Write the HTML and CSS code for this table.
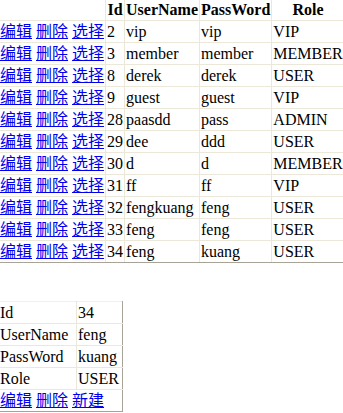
FILE: index.html
```html
<!DOCTYPE html>
<html>
<head>
<meta charset="utf-8">
<link rel="stylesheet" href="styles.css">
</head>
<body>
<div class="page">
<table class="grid list">
  <colgroup><col class="c-act"><col class="c-id"><col class="c-name"><col class="c-pass"><col class="c-role"></colgroup>
  <tr><th></th><th>Id</th><th>UserName</th><th>PassWord</th><th>Role</th></tr>
  <tr><td class="act"><a href="#">编辑</a> <a href="#">删除</a> <a href="#">选择</a></td><td>2</td><td>vip</td><td>vip</td><td>VIP</td></tr>
  <tr><td class="act"><a href="#">编辑</a> <a href="#">删除</a> <a href="#">选择</a></td><td>3</td><td>member</td><td>member</td><td>MEMBER</td></tr>
  <tr><td class="act"><a href="#">编辑</a> <a href="#">删除</a> <a href="#">选择</a></td><td>8</td><td>derek</td><td>derek</td><td>USER</td></tr>
  <tr><td class="act"><a href="#">编辑</a> <a href="#">删除</a> <a href="#">选择</a></td><td>9</td><td>guest</td><td>guest</td><td>VIP</td></tr>
  <tr><td class="act"><a href="#">编辑</a> <a href="#">删除</a> <a href="#">选择</a></td><td>28</td><td>paasdd</td><td>pass</td><td>ADMIN</td></tr>
  <tr><td class="act"><a href="#">编辑</a> <a href="#">删除</a> <a href="#">选择</a></td><td>29</td><td>dee</td><td>ddd</td><td>USER</td></tr>
  <tr><td class="act"><a href="#">编辑</a> <a href="#">删除</a> <a href="#">选择</a></td><td>30</td><td>d</td><td>d</td><td>MEMBER</td></tr>
  <tr><td class="act"><a href="#">编辑</a> <a href="#">删除</a> <a href="#">选择</a></td><td>31</td><td>ff</td><td>ff</td><td>VIP</td></tr>
  <tr><td class="act"><a href="#">编辑</a> <a href="#">删除</a> <a href="#">选择</a></td><td>32</td><td>fengkuang</td><td>feng</td><td>USER</td></tr>
  <tr><td class="act"><a href="#">编辑</a> <a href="#">删除</a> <a href="#">选择</a></td><td>33</td><td>feng</td><td>feng</td><td>USER</td></tr>
  <tr><td class="act"><a href="#">编辑</a> <a href="#">删除</a> <a href="#">选择</a></td><td>34</td><td>feng</td><td>kuang</td><td>USER</td></tr>
</table>

<table class="grid detail">
  <colgroup><col class="c-label"><col class="c-value"></colgroup>
  <tr><td>Id</td><td>34</td></tr>
  <tr><td>UserName</td><td>feng</td></tr>
  <tr><td>PassWord</td><td>kuang</td></tr>
  <tr><td>Role</td><td>USER</td></tr>
  <tr><td colspan="2" class="act"><a href="#">编辑</a> <a href="#">删除</a> <a href="#">新建</a></td></tr>
</table>
</div>
</body>
</html>
```
FILE: styles.css
```css
html, body {
  margin: 0;
  padding: 0;
  background: #ffffff;
}

.page {
  display: flex;
  flex-direction: column;
  align-items: flex-start;
  margin: -2px 0 0 -2px;
  font-family: "Liberation Serif", "Noto Sans CJK SC", serif;
  font-size: 16px;
  color: #000000;
}

.grid {
  border-collapse: collapse;
  border-top: 1px solid #f1efe6;
  border-left: 1px solid #f1efe6;
  border-right: 1px solid #a7a497;
  border-bottom: 1px solid #a7a497;
}

.grid th,
.grid td {
  box-sizing: border-box;
  height: 22px;
  padding: 0 1px;
  border: 1px solid #ebe8da;
  white-space: nowrap;
  line-height: 20px;
  vertical-align: middle;
}

.grid tr:first-child th,
.grid tr:first-child td {
  border-top-color: #f1efe6;
}

.grid th {
  font-weight: bold;
  text-align: center;
}

.grid td {
  text-align: left;
}

.grid tr > :last-child {
  border-right-color: #a7a497;
}

.grid tr:last-child > * {
  border-bottom-color: #a7a497;
}

.c-act { width: 108px; }
.c-id { width: 18px; }
.c-name { width: 76px; }
.c-pass { width: 70px; }
.c-role { width: 68px; }

.detail {
  margin-top: 38px;
}

.c-label { width: 78px; }
.c-value { width: 46px; }

.act a {
  font-family: "Noto Sans CJK SC", sans-serif;
  line-height: 16px;
  color: #0000ee;
  text-decoration: underline;
}
```
